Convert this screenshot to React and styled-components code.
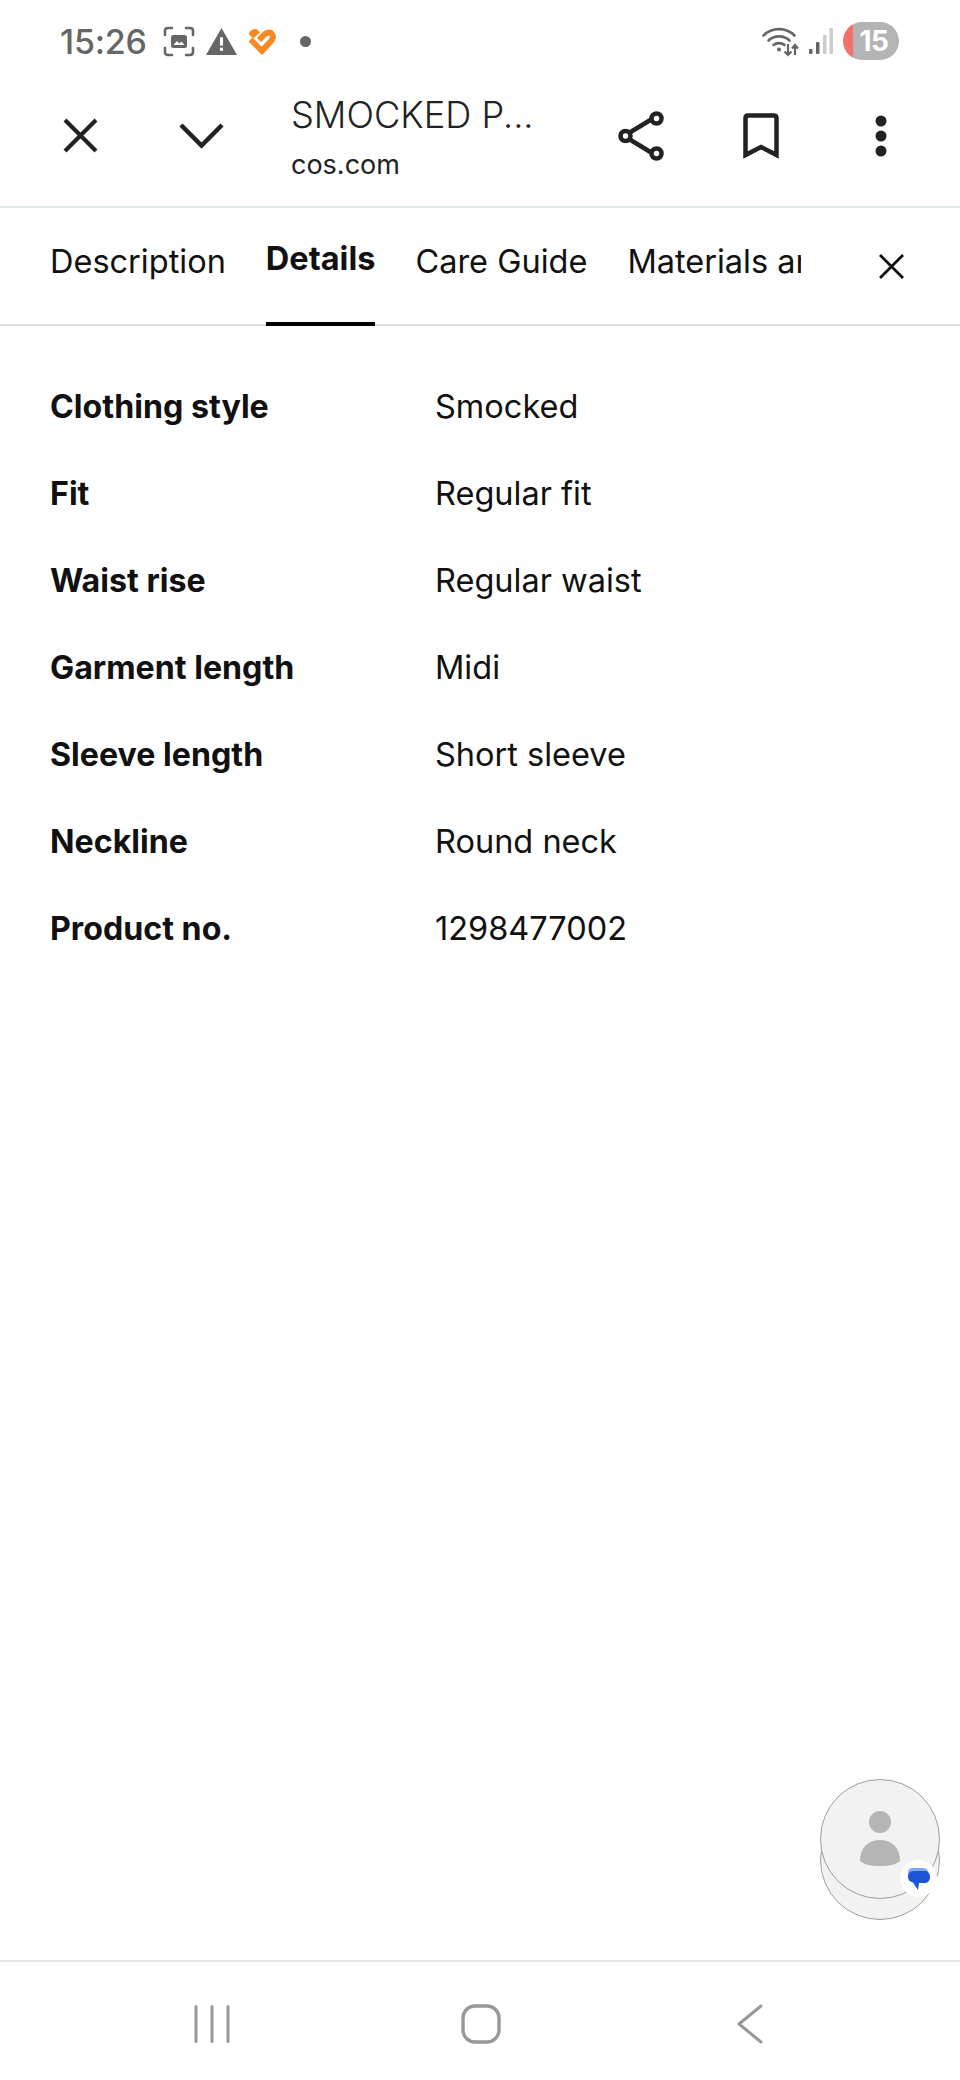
import React from 'react';
import styled, { createGlobalStyle } from 'styled-components';

const Global = createGlobalStyle`
  html, body { margin: 0; padding: 0; background: #fff; }
  * { box-sizing: border-box; }
`;

const Screen = styled.div`
  position: relative;
  width: 960px;
  height: 2080px;
  display: flex;
  flex-direction: column;
  background: #fff;
  font-family: Inter, "Liberation Sans", sans-serif;
  color: #111;
  overflow: hidden;
`;

const StatusBar = styled.div`
  height: 75px;
  flex: none;
  padding: 12px 61px 5px 60px;
  display: flex;
  align-items: center;
  justify-content: space-between;
`;
const StatusGroup = styled.div`
  display: flex;
  align-items: center;
`;
const Clock = styled.span`
  font-size: 34px;
  font-weight: 500;
  color: #666;
  width: 103px;
  letter-spacing: -0.2px;
`;
const StatusIcon = styled.svg`
  display: block;
  flex: none;
  margin-right: ${p => p.$gap || 0}px;
`;
const Battery = styled.div`
  width: 56px;
  height: 38px;
  border-radius: 19px;
  background: linear-gradient(to right, #f4716a 0 10px, #b4b4b4 10px);
  color: #fff;
  font-size: 28px;
  font-weight: 700;
  display: flex;
  align-items: center;
  justify-content: center;
  padding-left: 6px;
  letter-spacing: -0.5px;
`;

const Header = styled.header`
  height: 133px;
  flex: none;
  display: flex;
  align-items: center;
  padding: 0 0 10px 62px;
  border-bottom: 2px solid #e4e9ec;
`;
const HeaderIcon = styled.svg`
  display: block;
  flex: none;
  margin-right: ${p => p.$gap || 0}px;
`;
const TitleBlock = styled.div`
  width: 327px;
  flex: none;
  display: flex;
  flex-direction: column;
  margin-top: 3px;
`;
const Title = styled.div`
  font-size: 36.2px;
  font-weight: 300;
  color: #222;
  line-height: 44px;
  white-space: nowrap;
`;
const Site = styled.div`
  font-size: 27px;
  color: #222;
  font-weight: 400;
  line-height: 32px;
  margin-top: 12px;
`;

const TabBar = styled.nav`
  height: 118px;
  flex: none;
  display: flex;
  border-bottom: 2px solid #dcdcdc;
`;
const TabScroller = styled.div`
  width: 801px;
  height: 118px;
  flex: none;
  padding-left: 50px;
  display: flex;
  gap: 40px;
  overflow: hidden;
`;
const Tab = styled.div`
  position: relative;
  flex: none;
  height: 118px;
  padding-top: ${p => (p.$active ? 31 : 34)}px;
  font-size: 32.5px;
  line-height: 40px;
  font-weight: ${p => (p.$active ? 700 : 400)};
  white-space: nowrap;
  ${p => p.$active && `
    &::after {
      content: '';
      position: absolute;
      left: 0; right: 0; bottom: 0;
      height: 4px;
      background: #000;
    }
  `}
`;
const TabClose = styled.svg`
  display: block;
  margin: 45px 0 0 77px;
`;

const Specs = styled.dl`
  margin: 0;
  padding: 37px 50px 0;
  display: flex;
  flex-direction: column;
`;
const SpecRow = styled.div`
  height: 87px;
  display: grid;
  grid-template-columns: 385px 1fr;
  align-items: center;
`;
const SpecLabel = styled.dt`
  font-weight: 700;
  font-size: 32.2px;
`;
const SpecValue = styled.dd`
  margin: 0;
  font-weight: 400;
  font-size: 32.5px;
`;

const Spacer = styled.div`
  flex: 1;
`;

const NavBar = styled.div`
  height: 120px;
  flex: none;
  border-top: 2px solid #e8e8e8;
  display: grid;
  grid-template-columns: 267px 276px 1fr;
  align-items: center;
  padding: 6px 0 0 194px;
`;

const ChatHead = styled.div`
  position: absolute;
  left: 820px;
  top: 1779px;
  width: 120px;
  height: 141px;
`;
const ChatDisc = styled.div`
  position: absolute;
  left: 0;
  top: ${p => p.$top}px;
  width: 120px;
  height: 120px;
  border-radius: 50%;
  background: #f2f2f2;
  border: 1.5px solid #9e9e9e;
`;
const ChatPerson = styled.svg`
  position: absolute;
  left: 40px;
  top: 32px;
`;
const ChatBadge = styled.div`
  position: absolute;
  left: 80px;
  top: 81px;
  width: 37px;
  height: 37px;
  border-radius: 50%;
  background: #fff;
  display: flex;
  align-items: center;
  justify-content: center;
`;

const specs = [
  ['Clothing style', 'Smocked'],
  ['Fit', 'Regular fit'],
  ['Waist rise', 'Regular waist'],
  ['Garment length', 'Midi'],
  ['Sleeve length', 'Short sleeve'],
  ['Neckline', 'Round neck'],
  ['Product no.', '1298477002'],
];

export default function App() {
  return (
    <Screen>
      <Global />
      <StatusBar>
        <StatusGroup>
          <Clock>15:26</Clock>
          <StatusIcon $gap={11} width="32" height="31" viewBox="0 0 32 31" fill="none">
            <path d="M2 9V5q0-3 3-3h4M23 2h4q3 0 3 3v4M30 22v4q0 3-3 3h-4M9 29H5q-3 0-3-3v-4" stroke="#666" strokeWidth="2.6" strokeLinecap="round" />
            <rect x="8" y="9" width="16" height="13" rx="2.5" fill="#666" />
            <path d="M10.5 19l3.5-4 2.5 2.5 2-2 3 3.500z" fill="#fff" />
          </StatusIcon>
          <StatusIcon $gap={10} width="31" height="27" viewBox="0 0 30 26">
            <path d="M15 0L30 26H0z" fill="#666" />
            <rect x="13.500" y="9" width="3" height="8" fill="#fff" />
            <rect x="13.500" y="19" width="3" height="3" fill="#fff" />
          </StatusIcon>
          <StatusIcon $gap={23} width="30" height="28" viewBox="0 0 30 28" fill="none">
            <path d="M1.500 7Q4 1.500 9.500 2L13 5.500 6.500 11.500z" fill="#f58a24" />
            <path d="M3.500 12.500l10 10" stroke="#f58a24" strokeWidth="5.500" />
            <path d="M12 13L18 7Q21 4.500 24 6 27.500 9.500 24.500 13.500L13 26" stroke="#f58a24" strokeWidth="6" />
          </StatusIcon>
          <StatusIcon width="11" height="11" viewBox="0 0 11 11">
            <circle cx="5.500" cy="5.500" r="5.500" fill="#666" />
          </StatusIcon>
        </StatusGroup>
        <StatusGroup>
          <StatusIcon $gap={9} width="39" height="31" viewBox="0 0 37 31" fill="none">
            <path d="M1.500 9.500C10 1 24 1 32.500 9.500" stroke="#666" strokeWidth="2.6" strokeLinecap="round" />
            <path d="M6.500 14.500C12 9 22 9 27.500 14.500" stroke="#666" strokeWidth="2.6" strokeLinecap="round" />
            <path d="M11.500 19c3-2.500 8-2.500 11 0" stroke="#666" strokeWidth="2.6" strokeLinecap="round" />
            <circle cx="17" cy="23.500" r="2" fill="#666" />
            <path d="M26 18v11m-3.500-3.500L26 29l3.500-3.500" stroke="#666" strokeWidth="2.200" />
            <path d="M33 29V19m-3 3.500l3-3.500 3 3.500" stroke="#666" strokeWidth="2.200" />
          </StatusIcon>
          <StatusIcon $gap={10} width="24" height="26" viewBox="0 0 24 26">
            <rect x="0" y="21" width="3.500" height="5" rx="1" fill="#666" />
            <rect x="7" y="14" width="3.500" height="12" rx="1" fill="#666" />
            <rect x="14" y="7" width="3.500" height="19" rx="1" fill="#ccc" />
            <rect x="20.500" y="0" width="3.500" height="26" rx="1" fill="#ccc" />
          </StatusIcon>
          <Battery>15</Battery>
        </StatusGroup>
      </StatusBar>

      <Header>
        <HeaderIcon $gap={80} width="37" height="37" viewBox="0 0 37 37" fill="none">
          <path d="M3 3l31 31M34 3L3 34" stroke="#222" strokeWidth="4.200" />
        </HeaderIcon>
        <HeaderIcon $gap={67} width="45" height="27" viewBox="0 0 45 27" fill="none">
          <path d="M2 3l20.500 20.500L43 3" stroke="#222" strokeWidth="4.500" />
        </HeaderIcon>
        <TitleBlock>
          <Title>SMOCKED P...</Title>
          <Site>cos.com</Site>
        </TitleBlock>
        <HeaderIcon $gap={78} width="47" height="50" viewBox="0 0 47 50" fill="none">
          <path d="M11 22L34 8M11 28l23 14" stroke="#222" strokeWidth="4.500" />
          <circle cx="7.500" cy="25" r="5" stroke="#222" strokeWidth="4.500" />
          <circle cx="38.500" cy="7.500" r="5" stroke="#222" strokeWidth="4.500" />
          <circle cx="38.500" cy="42.500" r="5" stroke="#222" strokeWidth="4.500" />
        </HeaderIcon>
        <HeaderIcon $gap={96} width="36" height="46" viewBox="0 0 36 46" fill="none">
          <path d="M2.500 42V5q0-2.500 2.500-2.500h26q2.500 0 2.500 2.500v37L18 34z" stroke="#222" strokeWidth="4.500" />
        </HeaderIcon>
        <HeaderIcon width="12" height="42" viewBox="0 0 12 42">
          <circle cx="6" cy="6" r="5.500" fill="#222" />
          <circle cx="6" cy="21" r="5.500" fill="#222" />
          <circle cx="6" cy="36" r="5.500" fill="#222" />
        </HeaderIcon>
      </Header>

      <TabBar>
        <TabScroller>
          <Tab>Description</Tab>
          <Tab $active>Details</Tab>
          <Tab>Care Guide</Tab>
          <Tab>Materials and suppliers</Tab>
        </TabScroller>
        <TabClose width="27" height="27" viewBox="0 0 27 27" fill="none">
          <path d="M2 2l23 23M25 2L2 25" stroke="#111" strokeWidth="2.800" />
        </TabClose>
      </TabBar>

      <Specs>
        {specs.map(([k, v]) => (
          <SpecRow key={k}>
            <SpecLabel>{k}</SpecLabel>
            <SpecValue>{v}</SpecValue>
          </SpecRow>
        ))}
      </Specs>

      <Spacer />

      <NavBar>
        <svg width="40" height="38" viewBox="0 0 40 38" fill="none">
          <path d="M2 1.500v35M18 1.500v35M34 1.500v35" stroke="#989898" strokeWidth="3" strokeLinecap="round" />
        </svg>
        <svg width="40" height="40" viewBox="0 0 40 40" fill="none">
          <rect x="2" y="2" width="36" height="36" rx="12" stroke="#989898" strokeWidth="3.400" />
        </svg>
        <svg width="26" height="40" viewBox="0 0 26 40" fill="none">
          <path d="M24 2L2 20l22 18" stroke="#989898" strokeWidth="3" strokeLinecap="round" strokeLinejoin="round" />
        </svg>
      </NavBar>

      <ChatHead>
        <ChatDisc $top={21} />
        <ChatDisc $top={0} />
        <ChatPerson width="40" height="56" viewBox="0 0 40 56">
          <circle cx="20" cy="11" r="11" fill="#b5b5b5" />
          <path d="M0 50c0-14 9-21 20-21s20 7 20 21c-3 3-10 5-20 5S3 53 0 50z" fill="#b5b5b5" />
        </ChatPerson>
        <ChatBadge>
          <svg width="24" height="24" viewBox="0 0 24 24">
            <path d="M5 1h10c4 0 6 2 6 4v4H1V5c0-2 2-4 4-4z" fill="#7aa7ee" />
            <path d="M7 4h11c3 0 5 2.500 5 6s-2 6-5 6h-6l-1 7-5-7.500C3 15 1 13 1 10s2-6 6-6z" fill="#1a56d6" />
          </svg>
        </ChatBadge>
      </ChatHead>
    </Screen>
  );
}
